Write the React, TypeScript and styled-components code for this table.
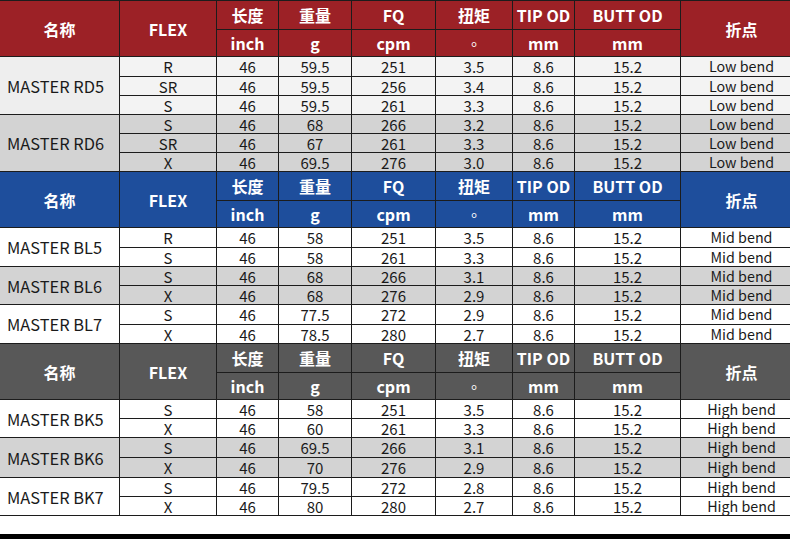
import React from "react";
import styled, { createGlobalStyle } from "styled-components";

const Global = createGlobalStyle`
  html, body { margin: 0; padding: 0; background: #ffffff; }
  body { width: 790px; height: 539px; overflow: hidden; font-family: "Noto Sans CJK SC", "Noto Sans", sans-serif; }
`;

const Page = styled.div`
  width: 790px;
  height: 539px;
  display: flex;
  flex-direction: column;
  background: #ffffff;
  overflow: hidden;
`;

const Section = styled.div<{ $rows: string; $last?: boolean }>`
  display: grid;
  grid-template-columns: 119px 96px 61px 72px 83px 76px 61px 105px 121px;
  grid-template-rows: 28px 26px ${(p) => p.$rows};
  gap: 1px;
  width: 802px;
  flex-shrink: 0;
  padding-top: 1px;
  padding-bottom: ${(p) => (p.$last ? "1px" : "0")};
  background: #1c1c1c;
`;

const HeadCell = styled.div<{ $bg: string; $span?: boolean }>`
  grid-row: ${(p) => (p.$span ? "span 2" : "auto")};
  background: ${(p) => p.$bg};
  color: #ffffff;
  font-weight: 700;
  font-size: 16px;
  display: flex;
  align-items: center;
  justify-content: center;
  white-space: nowrap;
`;

const Dot = styled.span`
  font-family: "Noto Sans CJK TC", sans-serif;
  font-weight: 400;
  font-size: 15px;
`;

const NameCell = styled.div<{ $bg: string; $span: number }>`
  grid-row: span ${(p) => p.$span};
  background: ${(p) => p.$bg};
  color: #1a1a1a;
  font-size: 16.4px;
  display: flex;
  align-items: center;
  padding-left: 7px;
  white-space: nowrap;
`;

const Cell = styled.div<{ $bg: string; $text?: boolean }>`
  background: ${(p) => p.$bg};
  color: #1a1a1a;
  font-size: ${(p) => (p.$text ? "14.3px" : "15px")};
  line-height: 1;
  display: flex;
  align-items: center;
  justify-content: center;
  white-space: nowrap;
`;

const Gap = styled.div`
  height: 18px;
  flex-shrink: 0;
  background: #ffffff;
`;

const BottomBar = styled.div`
  flex: 1;
  background: #000000;
`;

type Row = [string, string, string, string, string, string, string, string];
type Group = { name: string; bg: string; nameBg: string; rows: Row[] };
type SectionData = { color: string; rows: string; groups: Group[]; last?: boolean };

const LIGHT = "#f3f3f3";
const WHITE = "#ffffff";
const GRAY = "#d3d3d3";

const sections: SectionData[] = [
  {
    color: "#9c2126",
    rows: "19px 18px 18px 18px 18px 18px",
    groups: [
      {
        name: "MASTER RD5",
        bg: LIGHT,
        nameBg: "#eeeeee",
        rows: [
          ["R", "46", "59.5", "251", "3.5", "8.6", "15.2", "Low bend"],
          ["SR", "46", "59.5", "256", "3.4", "8.6", "15.2", "Low bend"],
          ["S", "46", "59.5", "261", "3.3", "8.6", "15.2", "Low bend"],
        ],
      },
      {
        name: "MASTER RD6",
        bg: GRAY,
        nameBg: GRAY,
        rows: [
          ["S", "46", "68", "266", "3.2", "8.6", "15.2", "Low bend"],
          ["SR", "46", "67", "261", "3.3", "8.6", "15.2", "Low bend"],
          ["X", "46", "69.5", "276", "3.0", "8.6", "15.2", "Low bend"],
        ],
      },
    ],
  },
  {
    color: "#1e4e9c",
    rows: "19px 18px 18px 18px 19px 18px",
    groups: [
      {
        name: "MASTER BL5",
        bg: WHITE,
        nameBg: WHITE,
        rows: [
          ["R", "46", "58", "251", "3.5", "8.6", "15.2", "Mid bend"],
          ["S", "46", "58", "261", "3.3", "8.6", "15.2", "Mid bend"],
        ],
      },
      {
        name: "MASTER BL6",
        bg: GRAY,
        nameBg: GRAY,
        rows: [
          ["S", "46", "68", "266", "3.1", "8.6", "15.2", "Mid bend"],
          ["X", "46", "68", "276", "2.9", "8.6", "15.2", "Mid bend"],
        ],
      },
      {
        name: "MASTER BL7",
        bg: WHITE,
        nameBg: WHITE,
        rows: [
          ["S", "46", "77.5", "272", "2.9", "8.6", "15.2", "Mid bend"],
          ["X", "46", "78.5", "280", "2.7", "8.6", "15.2", "Mid bend"],
        ],
      },
    ],
  },
  {
    color: "#585858",
    rows: "18px 18px 19px 19px 18px 18px",
    last: true,
    groups: [
      {
        name: "MASTER BK5",
        bg: WHITE,
        nameBg: WHITE,
        rows: [
          ["S", "46", "58", "251", "3.5", "8.6", "15.2", "High bend"],
          ["X", "46", "60", "261", "3.3", "8.6", "15.2", "High bend"],
        ],
      },
      {
        name: "MASTER BK6",
        bg: GRAY,
        nameBg: GRAY,
        rows: [
          ["S", "46", "69.5", "266", "3.1", "8.6", "15.2", "High bend"],
          ["X", "46", "70", "276", "2.9", "8.6", "15.2", "High bend"],
        ],
      },
      {
        name: "MASTER BK7",
        bg: WHITE,
        nameBg: WHITE,
        rows: [
          ["S", "46", "79.5", "272", "2.8", "8.6", "15.2", "High bend"],
          ["X", "46", "80", "280", "2.7", "8.6", "15.2", "High bend"],
        ],
      },
    ],
  },
];

function Header({ color }: { color: string }) {
  return (
    <>
      <HeadCell $bg={color} $span>名称</HeadCell>
      <HeadCell $bg={color} $span>FLEX</HeadCell>
      <HeadCell $bg={color}>长度</HeadCell>
      <HeadCell $bg={color}>重量</HeadCell>
      <HeadCell $bg={color}>FQ</HeadCell>
      <HeadCell $bg={color}>扭矩</HeadCell>
      <HeadCell $bg={color}>TIP OD</HeadCell>
      <HeadCell $bg={color}>BUTT OD</HeadCell>
      <HeadCell $bg={color} $span>折点</HeadCell>
      <HeadCell $bg={color}>inch</HeadCell>
      <HeadCell $bg={color}>g</HeadCell>
      <HeadCell $bg={color}>cpm</HeadCell>
      <HeadCell $bg={color}>
        <Dot>。</Dot>
      </HeadCell>
      <HeadCell $bg={color}>mm</HeadCell>
      <HeadCell $bg={color}>mm</HeadCell>
    </>
  );
}

export default function App() {
  return (
    <Page>
      <Global />
      {sections.map((s, si) => (
        <Section key={si} $rows={s.rows} $last={s.last}>
          <Header color={s.color} />
          {s.groups.map((g) => (
            <React.Fragment key={g.name}>
              <NameCell $bg={g.nameBg} $span={g.rows.length}>
                {g.name}
              </NameCell>
              {g.rows.map((r, ri) =>
                r.map((v, ci) => (
                  <Cell key={`${g.name}-${ri}-${ci}`} $bg={g.bg} $text={ci === 7}>
                    {v}
                  </Cell>
                ))
              )}
            </React.Fragment>
          ))}
        </Section>
      ))}
      <Gap />
      <BottomBar />
    </Page>
  );
}
